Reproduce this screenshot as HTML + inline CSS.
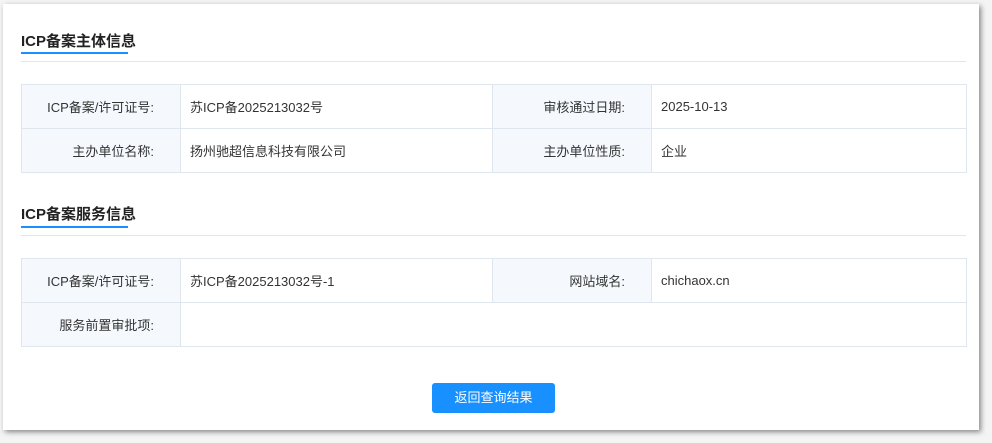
<!DOCTYPE html>
<html><head><meta charset="utf-8"><style>
body{margin:0;width:992px;height:443px;background:#f4f4f4;font-family:"Liberation Sans","Noto Sans CJK SC",sans-serif;overflow:hidden;position:relative}
.card{position:absolute;left:3px;top:4px;width:976px;height:426px;background:#fff;box-shadow:2px 2px 5px rgba(0,0,0,.45)}
.t{position:absolute;left:21px;font-size:15px;font-weight:bold;color:#222}
.ul{position:absolute;left:21px;width:107px;height:2px;background:#1890ff}
.hl{position:absolute;left:21px;width:945px;height:1px;background:#dde8f2}
table{position:absolute;left:21px;width:946px;border-collapse:collapse;font-size:13px;color:#333}
td{border:1px solid #dfe6ee;height:43px;padding:0}
td.l{background:#f5f9fd;text-align:right;padding-right:26px;width:132px}
td.v{padding-left:9px}
.btn{position:absolute;left:432px;top:383px;width:123px;height:30px;background:#1890ff;border-radius:3px;color:#fff;font-size:13px;text-align:center;line-height:30px}
</style></head><body>
<div class="card"></div>
<div class="t" style="top:30px">ICP备案主体信息</div>
<div class="ul" style="top:52px"></div>
<div class="hl" style="top:61px"></div>
<table style="top:84px">
<tr><td class="l">ICP备案/许可证号:</td><td class="v" style="width:302px">苏ICP备2025213032号</td><td class="l">审核通过日期:</td><td class="v">2025-10-13</td></tr>
<tr><td class="l">主办单位名称:</td><td class="v">扬州驰超信息科技有限公司</td><td class="l">主办单位性质:</td><td class="v">企业</td></tr>
</table>
<div class="t" style="top:203px">ICP备案服务信息</div>
<div class="ul" style="top:226px"></div>
<div class="hl" style="top:235px"></div>
<table style="top:258px">
<tr><td class="l">ICP备案/许可证号:</td><td class="v" style="width:302px">苏ICP备2025213032号-1</td><td class="l">网站域名:</td><td class="v">chichaox.cn</td></tr>
<tr><td class="l">服务前置审批项:</td><td class="v" colspan="3"></td></tr>
</table>
<div class="btn">返回查询结果</div>
</body></html>
